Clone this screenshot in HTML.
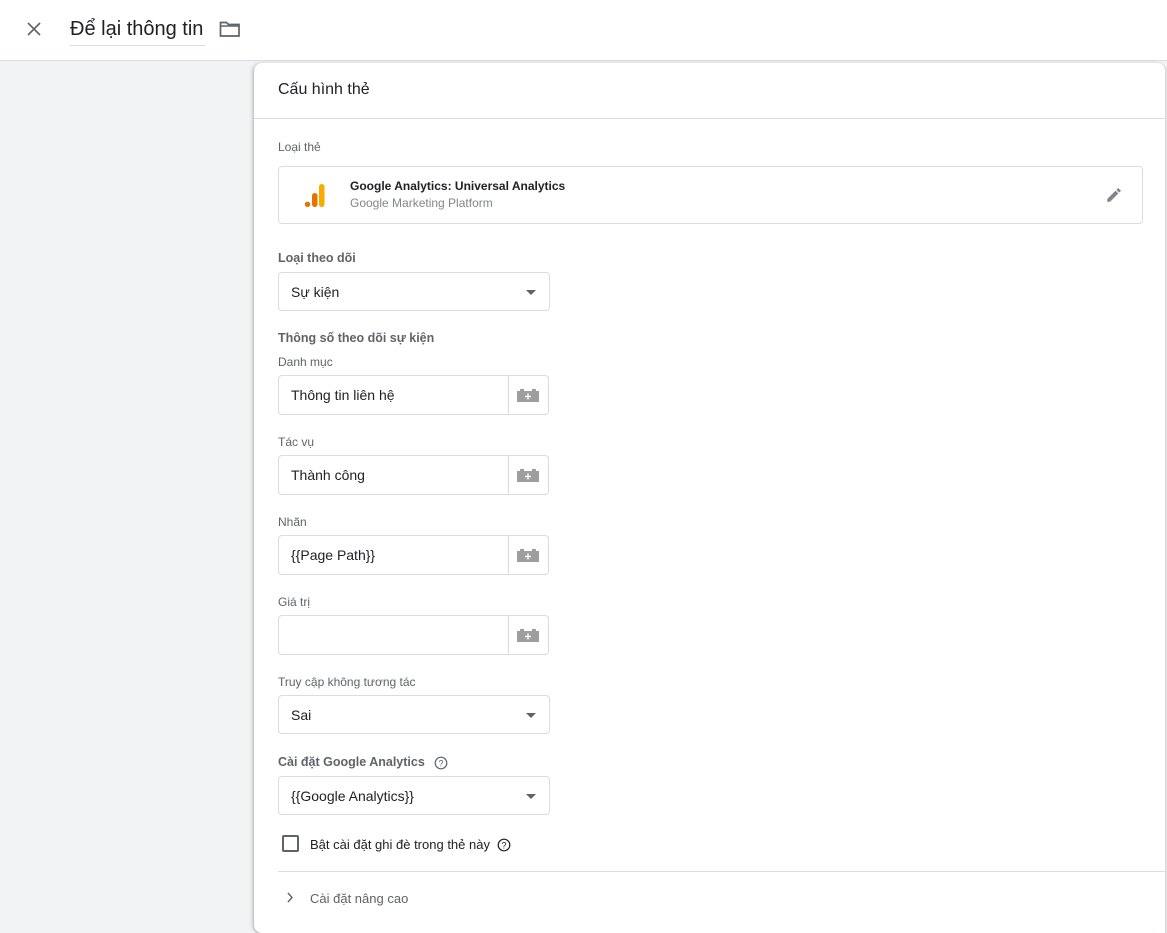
<!DOCTYPE html>
<html><head><meta charset="utf-8"><style>
*{box-sizing:border-box;margin:0;padding:0}
body{width:1167px;height:927px;overflow:hidden;background:#f1f3f4;font-family:"Liberation Sans",Arial,sans-serif;position:relative;color:#202124}
.a{position:absolute}
.hdr{left:0;top:0;width:1167px;height:61px;background:#fff;border-bottom:1px solid #dadce0}
.card{left:254px;top:63px;width:912px;height:870px;background:#fff;border-radius:8px 8px 0 8px;box-shadow:-2px 0 3px rgba(0,0,0,.15),0 1px 2px rgba(0,0,0,.2);border-right:1px solid #dadce0}
.lbl{font-size:12px;color:#5f6368}
.bl{font-size:12.5px;color:#5f6368;font-weight:bold}
.box{border:1px solid #dadce0;border-radius:4px;background:#fff}
.inp{left:278px;width:271px;height:40px;font-size:14px;padding:11px 12px}
.inp .d{position:absolute;left:229px;top:0;bottom:0;border-left:1px solid #dadce0}
.inp svg{position:absolute;left:237px;top:11px}
.sel{left:278px;width:272px;height:39px;font-size:14px;padding:11px 12px}
.sel:after{content:"";position:absolute;right:13px;top:17px;border-left:5px solid transparent;border-right:5px solid transparent;border-top:5px solid #5f6368}
</style></head><body>
<div class="a hdr">
<svg class="a" style="left:26px;top:21px" width="16" height="16" viewBox="0 0 16 16"><path d="M2 2L14 14M14 2L2 14" stroke="#5f6368" stroke-width="1.6"/></svg>
<div class="a" style="left:70px;top:18px;font-size:20px;color:#202124">Để lại thông tin</div>
<div class="a" style="left:70px;top:45px;width:135px;border-top:1px solid #dadce0"></div>
<svg class="a" style="left:219px;top:20px" width="22" height="18" viewBox="0 0 22 18"><path d="M1.5 2.5h6l2 2h10.5v11.5h-18.5z" fill="none" stroke="#5f6368" stroke-width="1.7"/><path d="M1.5 6h18.5" stroke="#5f6368" stroke-width="1.5"/></svg>
</div>
<div class="a card">
<div class="a" style="left:24px;top:18px;font-size:16px;color:#202124">Cấu hình thẻ</div>
<div class="a" style="left:0;top:55px;width:912px;border-top:1px solid #dadce0"></div>
</div>
<div class="a lbl" style="left:278px;top:140px">Loại thẻ</div>
<div class="a box" style="left:278px;top:166px;width:865px;height:58px">
<svg class="a" style="left:24px;top:16px" width="24" height="26" viewBox="0 0 24 26"><rect x="16" y="1" width="5.5" height="23" rx="2.7" fill="#f9ab00"/><rect x="9" y="10" width="5.5" height="14" rx="2.7" fill="#e37400"/><circle cx="4.5" cy="21.3" r="2.7" fill="#e37400"/></svg>
<div class="a" style="left:71px;top:12px;font-size:12px;font-weight:bold;color:#202124">Google Analytics: Universal Analytics</div>
<div class="a" style="left:71px;top:29px;font-size:12px;color:#80868b">Google Marketing Platform</div>
<svg class="a" style="left:826px;top:19px" width="18" height="18" viewBox="0 0 24 24"><path d="M3 17.25V21h3.75L17.81 9.94l-3.75-3.75L3 17.25zM20.71 7.04a1 1 0 000-1.41l-2.34-2.34a1 1 0 00-1.41 0l-1.83 1.83 3.75 3.75 1.83-1.83z" fill="#80868b"/></svg>
</div>
<div class="a bl" style="left:278px;top:251px">Loại theo dõi</div>
<div class="a box sel" style="top:272px">Sự kiện</div>
<div class="a bl" style="left:278px;top:331px">Thông số theo dõi sự kiện</div>
<div class="a lbl" style="left:278px;top:355px">Danh mục</div>
<div class="a box inp" style="top:375px">Thông tin liên hệ<div class="d"></div><svg width="24" height="16" viewBox="0 0 24 16"><path d="M1 4h3V2h4v2h8V2h4v2h3v11H1z" fill="#9e9e9e"/><path d="M12 6.5v6M9 9.5h6" stroke="#fff" stroke-width="1.4"/></svg></div>
<div class="a lbl" style="left:278px;top:435px">Tác vụ</div>
<div class="a box inp" style="top:455px">Thành công<div class="d"></div><svg width="24" height="16" viewBox="0 0 24 16"><path d="M1 4h3V2h4v2h8V2h4v2h3v11H1z" fill="#9e9e9e"/><path d="M12 6.5v6M9 9.5h6" stroke="#fff" stroke-width="1.4"/></svg></div>
<div class="a lbl" style="left:278px;top:515px">Nhãn</div>
<div class="a box inp" style="top:535px">{{Page Path}}<div class="d"></div><svg width="24" height="16" viewBox="0 0 24 16"><path d="M1 4h3V2h4v2h8V2h4v2h3v11H1z" fill="#9e9e9e"/><path d="M12 6.5v6M9 9.5h6" stroke="#fff" stroke-width="1.4"/></svg></div>
<div class="a lbl" style="left:278px;top:595px">Giá trị</div>
<div class="a box inp" style="top:615px"><div class="d"></div><svg width="24" height="16" viewBox="0 0 24 16"><path d="M1 4h3V2h4v2h8V2h4v2h3v11H1z" fill="#9e9e9e"/><path d="M12 6.5v6M9 9.5h6" stroke="#fff" stroke-width="1.4"/></svg></div>
<div class="a lbl" style="left:278px;top:675px">Truy cập không tương tác</div>
<div class="a box sel" style="top:695px">Sai</div>
<div class="a bl" style="left:278px;top:755px">Cài đặt Google Analytics</div>
<svg class="a" style="left:434px;top:756px" width="14" height="14" viewBox="0 0 14 14"><circle cx="7" cy="7" r="5.8" fill="none" stroke="#5f6368" stroke-width="1.2"/><text x="7" y="10.5" font-size="9" text-anchor="middle" fill="#5f6368" font-family="Liberation Sans">?</text></svg>
<div class="a box sel" style="top:776px">{{Google Analytics}}</div>
<div class="a" style="left:282px;top:835px;width:17px;height:17px;border:2px solid #5f6368;border-radius:2px"></div>
<div class="a" style="left:310px;top:837px;font-size:13px;color:#202124">Bật cài đặt ghi đè trong thẻ này</div>
<svg class="a" style="left:497px;top:838px" width="14" height="14" viewBox="0 0 14 14"><circle cx="7" cy="7" r="5.8" fill="none" stroke="#202124" stroke-width="1.2"/><text x="7" y="10.5" font-size="9" text-anchor="middle" fill="#202124" font-family="Liberation Sans">?</text></svg>
<div class="a" style="left:278px;top:871px;width:888px;border-top:1px solid #dadce0"></div>
<svg class="a" style="left:286px;top:892px" width="8" height="11" viewBox="0 0 8 11"><path d="M2 1l4 4.5L2 10" fill="none" stroke="#5f6368" stroke-width="1.4"/></svg>
<div class="a" style="left:310px;top:891px;font-size:13px;color:#5f6368">Cài đặt nâng cao</div>
</body></html>
